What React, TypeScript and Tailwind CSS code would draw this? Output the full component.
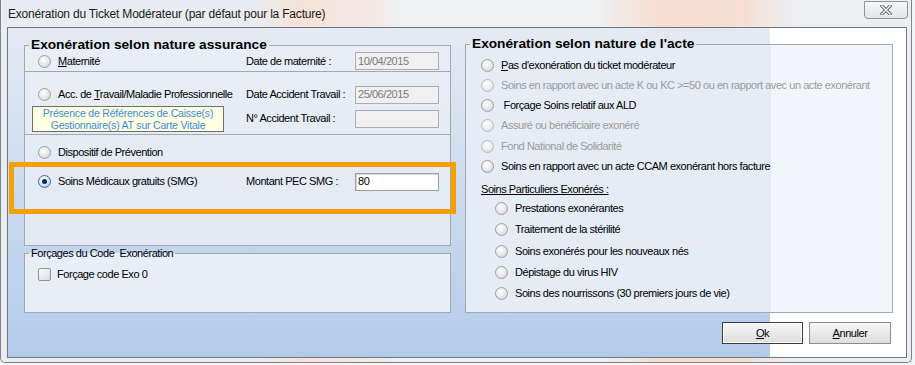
import React from 'react';

const Radio: React.FC<{ checked?: boolean; disabled?: boolean }> = ({ checked, disabled }) => (
  <span
    className={
      checked
        ? 'flex h-[13px] w-[13px] shrink-0 items-center justify-center rounded-full border border-[#3f6c9c] bg-[radial-gradient(circle_at_40%_35%,#ffffff_0%,#d3e6f7_55%,#8fb5dc_100%)]'
        : disabled
        ? 'flex h-[13px] w-[13px] shrink-0 items-center justify-center rounded-full border border-[#b7bcc2] bg-[radial-gradient(circle_at_40%_35%,#ffffff_0%,#ebebeb_55%,#cfd1d4_100%)]'
        : 'flex h-[13px] w-[13px] shrink-0 items-center justify-center rounded-full border border-[#9aa0a7] bg-[radial-gradient(circle_at_40%_35%,#ffffff_0%,#e6e6e6_55%,#c6c8cb_100%)]'
    }
  >
    {checked && <span className="h-[5px] w-[5px] rounded-full bg-[#0f2a50]" />}
  </span>
);

const Field: React.FC<{ value?: string; enabled?: boolean }> = ({ value, enabled }) => (
  <div
    className={
      enabled
        ? 'flex h-[18px] w-[84px] items-center border border-[#9a9fa5] bg-white px-[2px] text-black shadow-[inset_1px_1px_0_#d6d6d6]'
        : 'flex h-[18px] w-[84px] items-center border border-[#a9aeb4] bg-[#f0f0f0] px-[2px] text-[#7a7a7a]'
    }
  >
    {value}
  </div>
);

const Item: React.FC<{ label: React.ReactNode; disabled?: boolean; h?: string }> = ({ label, disabled, h = 'h-[20.25px]' }) => (
  <div className={`flex ${h} items-center gap-[7px]`}>
    <Radio disabled={disabled} />
    <span className={disabled ? 'text-[#9a9a9a]' : 'text-black'}>{label}</span>
  </div>
);

export default function App() {
  return (
    <div className="relative h-[365px] w-[915px] overflow-hidden whitespace-nowrap bg-[#f3f4f6] font-['Liberation_Sans',Arial,sans-serif] text-[11px] leading-none tracking-[-0.45px] text-black">
      {/* window */}
      <div className="h-[363px] w-[912px] rounded-b-[5px] border-b border-l border-r border-[#7d838a] bg-[linear-gradient(to_right,#e9edf1_0px,#e9edf1_250px,#f6e2d8_300px,#f3e7e1_360px,#eef0f2_400px,#eef0f2_600px,#f7ddd0_660px,#f6ded2_740px,#eceef1_790px)]">
        {/* title bar */}
        <div className="flex h-[27px] items-start justify-between">
          <div className="pl-[7px] pt-[8px] text-[12px] tracking-[-0.2px] text-[#1a1a1a]">
            Exonération du Ticket Modérateur (par défaut pour la Facture)
          </div>
          <div className="mr-[3px] mt-[1px] flex h-[18px] w-[44px] items-center justify-center rounded-b-[4px] border border-[#8e949b] bg-[linear-gradient(to_bottom,#f7f7f7,#e3e5e8)]">
            <svg width="12" height="10" viewBox="0 0 12 10">
              <path d="M2 1 L10 9 M10 1 L2 9" stroke="#5a5f66" strokeWidth="3.2" strokeLinecap="square" />
              <path d="M2 1 L10 9 M10 1 L2 9" stroke="#ffffff" strokeWidth="1.4" strokeLinecap="square" />
            </svg>
          </div>
        </div>

        {/* client area */}
        <div className="ml-[6px] h-[331px] w-[900px] border border-[#6f7680] bg-[linear-gradient(to_right,transparent_762px,#ffffff_762px),linear-gradient(to_bottom,#e4eaf3,#b3cbea)] pl-[16px] pr-[13px] pt-[9px]">
          <div className="flex gap-[14px]">
            {/* left column */}
            <div className="mt-[1px] flex w-[427px] flex-col">
              <fieldset className="h-[208px] border border-[#a2a8ae] bg-[linear-gradient(to_bottom,#e9eef6,#e2e9f3)]">
                <legend className="ml-[4px] px-[2px] text-[13.7px] leading-[14px] font-bold tracking-normal">
                  Exonération selon nature assurance
                </legend>
                {/* maternite */}
                <div className="flex h-[18px] items-center pl-[13px]">
                  <div className="flex w-[208px] items-center gap-[7px]">
                    <Radio />
                    <span>
                      <span className="underline">M</span>aternité
                    </span>
                  </div>
                  <span className="w-[109px]">Date de maternité :</span>
                  <Field value="10/04/2015" />
                </div>
                {/* accident travail */}
                <div className="mt-[1px] flex border-t border-[#a2a8ae] pb-[2px] pt-[14px]">
                  <div className="flex w-[221px] flex-col">
                    <div className="flex h-[17px] items-center gap-[7px] pl-[13px]">
                      <Radio />
                      <span>
                        Acc. de <span className="underline">T</span>ravail/Maladie Professionnelle
                      </span>
                    </div>
                    <div className="ml-[7px] mt-[3px] flex h-[26px] w-[192px] flex-col items-center justify-center border border-[#6e6e6e] bg-[#ffffe1] text-[10.5px] leading-[12px] tracking-[-0.2px] text-[#3a8be6]">
                      <span>Présence de Références de Caisse(s)</span>
                      <span>Gestionnaire(s) AT sur Carte Vitale</span>
                    </div>
                  </div>
                  <div className="flex flex-col gap-[7px]">
                    <div className="flex h-[17px] items-center">
                      <span className="w-[109px]">Date Accident Travail :</span>
                      <Field value="25/06/2015" />
                    </div>
                    <div className="flex h-[17px] items-center">
                      <span className="w-[109px]">N° Accident Travail :</span>
                      <Field />
                    </div>
                  </div>
                </div>
                {/* prevention / SMG */}
                <div className="border-t border-[#a2a8ae] pl-[13px] pt-[9px]">
                  <div className="flex h-[17px] items-center gap-[7px]">
                    <Radio />
                    <span>Dispositif de Prévention</span>
                  </div>
                  <div className="mt-[12px] flex h-[17px] items-center">
                    <div className="flex w-[208px] items-center gap-[7px]">
                      <Radio checked />
                      <span>Soins Médicaux gratuits (SMG)</span>
                    </div>
                    <span className="w-[109px]">Montant PEC SMG :</span>
                    <Field value="80" enabled />
                  </div>
                </div>
              </fieldset>

              <fieldset className="mt-[1px] h-[66px] border border-[#a2a8ae] bg-[#e8eef6]">
                <legend className="ml-[4px] px-[2px] text-[11px] leading-[13px]">Forçages du Code&nbsp; Exonération</legend>
                <div className="box-content flex h-[17px] items-center gap-[6px] pl-[13px] pt-[6px]">
                  <span className="h-[13px] w-[13px] rounded-[2px] border border-[#8f959c] bg-[linear-gradient(to_bottom_right,#fafafa,#d9dbde)]" />
                  <span>Forçage code Exo 0</span>
                </div>
              </fieldset>
            </div>

            {/* right column */}
            <fieldset className="h-[276px] w-[428px] border border-[#a2a8ae] bg-[linear-gradient(to_right,#e6ecf5_305px,#f2f5f9_305px)] pl-[15px]">
              <legend className="-ml-[11px] px-[2px] text-[13.7px] leading-[14px] font-bold tracking-normal">
                Exonération selon nature de l'acte
              </legend>
              <div className="pt-[4px]">
                <Item
                  label={
                    <>
                      <span className="underline">P</span>as d'exonération du ticket modérateur
                    </>
                  }
                />
                <Item disabled label="Soins en rapport avec un acte K ou KC >=50 ou en rapport avec un acte exonérant" />
                <Item label={<>&nbsp;Forçage Soins relatif aux ALD</>} />
                <Item disabled label="Assuré ou bénéficiaire exonéré" />
                <Item disabled label="Fond National de Solidarité" />
                <Item label="Soins en rapport avec un acte CCAM exonérant hors facture" />
                <div className="mt-[3.5px] flex h-[18px] items-center underline">Soins Particuliers Exonérés :</div>
                <div className="pl-[14px]">
                  <Item h="h-[21.25px]" label="Prestations exonérantes" />
                  <Item h="h-[21.25px]" label="Traitement de la stérilité" />
                  <Item h="h-[21.25px]" label="Soins exonérés pour les nouveaux nés" />
                  <Item h="h-[21.25px]" label="Dépistage du virus HIV" />
                  <Item h="h-[21.25px]" label="Soins des nourrissons (30 premiers jours de vie)" />
                </div>
              </div>
            </fieldset>
          </div>

          {/* buttons */}
          <div className="mr-[2px] mt-[9px] flex justify-end gap-[6px]">
            <button className="flex h-[22px] w-[81px] items-center justify-center border border-[#3c3c3c] bg-[linear-gradient(to_bottom,#f6f6f6,#dedede)] text-[11px] shadow-[inset_0_0_0_1px_#ffffff]">
              <span>
                <span className="underline">O</span>k
              </span>
            </button>
            <button className="flex h-[22px] w-[82px] items-center justify-center border border-[#8a8f95] bg-[linear-gradient(to_bottom,#f6f6f6,#dedede)] text-[11px]">
              <span>
                <span className="underline">A</span>nnuler
              </span>
            </button>
          </div>
        </div>
      </div>

      {/* orange annotation */}
      <div className="absolute left-[9px] top-[162px] h-[52px] w-[447px] border-[5px] border-[#f5a000]" />
    </div>
  );
}
